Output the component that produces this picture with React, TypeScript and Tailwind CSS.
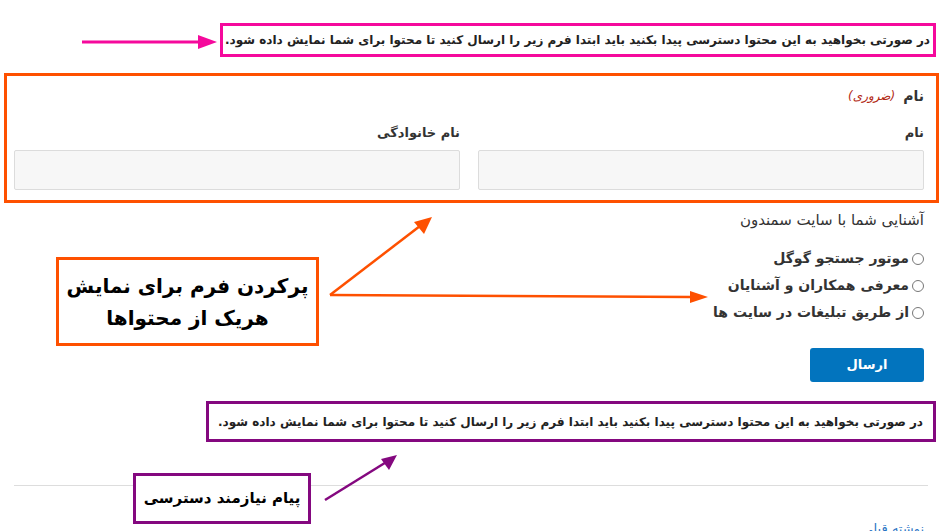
import React from 'react'

const fa = { fontFamily: '"DejaVu Sans", "Noto Sans", sans-serif' }

const notice =
  'در صورتی بخواهید به این محتوا دسترسی پیدا بکنید باید ابتدا فرم زیر را ارسال کنید تا محتوا برای شما نمایش داده شود.'

const Radio = ({ label }: { label: string }) => (
  <label className="flex items-center gap-[3px] text-[14px] font-bold text-[#333] h-[27px]">
    <span className="w-[12px] h-[12px] rounded-full border border-[#777] bg-white shrink-0" />
    <span>{label}</span>
  </label>
)

export default function App() {
  return (
    <div dir="rtl" className="relative w-[944px] h-[531px] overflow-hidden bg-white text-[#333]" style={fa}>
      {/* top notice */}
      <div className="pt-[23px]">
        <div className="mr-[8px] w-[716px] h-[34px] border-[3px] border-[#f5099c] flex items-center px-[3px] text-[12px] font-bold text-[#222] whitespace-nowrap overflow-hidden">
          {notice}
        </div>
      </div>

      {/* name fields */}
      <div className="mt-[16px] mr-[5px] w-[935px] h-[130px] border-[3px] border-[#fe5000] pr-[12px] pl-[7px] pt-[9px]">
        <div className="flex items-center gap-[8px] h-[22px]">
          <span className="text-[14px] font-bold">نام</span>
          <span className="text-[12px] italic text-[#b22a14]">(ضروری)</span>
        </div>
        <div className="mt-[16px] grid grid-cols-2 gap-[18px]">
          <div>
            <div className="text-[13px] font-bold h-[20px]">نام</div>
            <div className="mt-[7px] h-[40px] bg-[#f7f7f7] border border-[#dcdcdc] rounded-[2px]" />
          </div>
          <div>
            <div className="text-[13px] font-bold h-[20px]">نام خانوادگی</div>
            <div className="mt-[7px] h-[40px] bg-[#f7f7f7] border border-[#dcdcdc] rounded-[2px]" />
          </div>
        </div>
      </div>

      {/* how did you find us */}
      <div className="mr-[20px] pt-[6px]">
        <div className="text-[15px] text-[#333] h-[22px] leading-[22px]">آشنایی شما با سایت سمندون</div>
        <div className="mt-[14px] flex flex-col items-start">
          <Radio label="موتور جستجو گوگل" />
          <Radio label="معرفی همکاران و آشنایان" />
          <Radio label="از طریق تبلیغات در سایت ها" />
        </div>
        <button className="mt-[22px] w-[114px] h-[34px] rounded-[3px] bg-[#0274be] text-white text-[13px] font-bold">
          ارسال
        </button>
      </div>

      {/* bottom notice */}
      <div className="mt-[19px] mr-[8px] w-[730px] h-[41px] border-[3px] border-[#84087f] flex items-center px-[10px] text-[12px] font-bold text-[#222] whitespace-nowrap overflow-hidden">
        {notice}
      </div>

      <div className="mt-[43px] mr-[16px] ml-[14px] border-t border-[#dddddd]" />

      <div className="mr-[20px] mt-[33px] text-[13px] text-[#2a74c4]">نوشته قبلی</div>

      {/* annotations */}
      <svg className="absolute inset-0 pointer-events-none" width="944" height="531">
        <line x1="82" y1="42" x2="200" y2="42" stroke="#f5099c" strokeWidth="3" />
        <polygon points="198,35 217,42 198,49" fill="#f5099c" />

        <line x1="330" y1="295" x2="420" y2="226" stroke="#fe5000" strokeWidth="2.5" />
        <polygon points="432,217 424,234 414,222" fill="#fe5000" />
        <line x1="330" y1="295" x2="692" y2="297" stroke="#fe5000" strokeWidth="2.5" />
        <polygon points="690,291 708,297 690,303" fill="#fe5000" />

        <line x1="325" y1="500" x2="388" y2="461" stroke="#84087f" strokeWidth="2.5" />
        <polygon points="397,455 389,470 381,459" fill="#84087f" />
      </svg>

      <div className="absolute left-[56px] top-[257px] w-[263px] h-[89px] border-[3px] border-[#fe5000] bg-white flex flex-col items-center justify-center text-[20px] font-bold text-black leading-[32px] whitespace-nowrap">
        <span>پرکردن فرم برای نمایش</span>
        <span>هریک از محتواها</span>
      </div>

      <div className="absolute left-[133px] top-[473px] w-[178px] h-[51px] border-[3px] border-[#84087f] bg-white flex items-center justify-center text-[15px] font-bold text-black whitespace-nowrap">
        پیام نیازمند دسترسی
      </div>
    </div>
  )
}
